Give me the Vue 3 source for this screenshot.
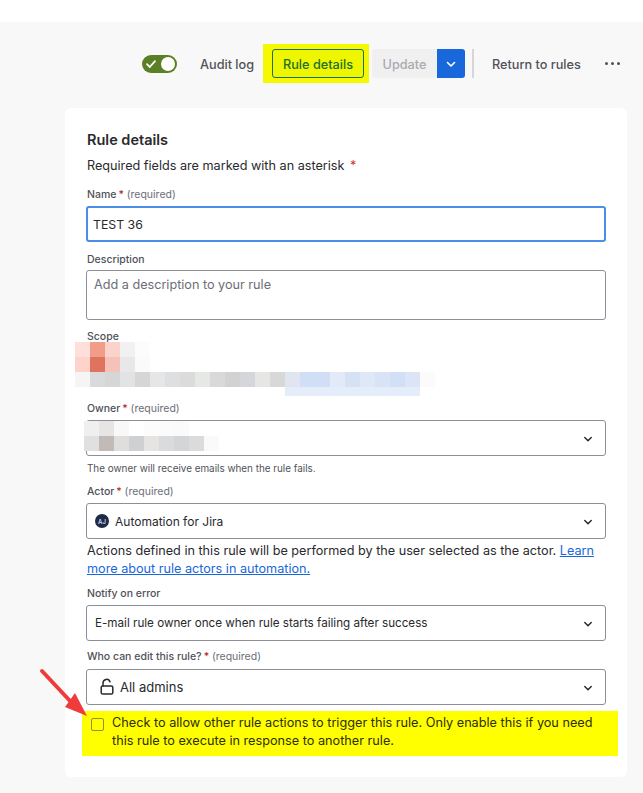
<script setup>
const scopeBlur = [
  ['#ffdfdb', '#f29c8a', '#fad3cb', '#f1f1f1', '#fcfcfc'],
  ['#fdd3cc', '#e0735d', '#f6c1b8', '#e8e8e8', '#fafafa'],
  ['#f5f5f3', '#d9dadc', '#d5d6d6', '#e2e3e5', '#d6d6d6', '#e6e6e6', '#dedfe1', '#dadbda', '#e6e8e6', '#d9d9d9', '#d2d2d2', '#d5d6db', '#e6e6e5', '#d9d8d8', '#e1e5ef', '#d0dff5', '#d0dff5', '#e2eafa', '#d5e2f4', '#dfe8f7', '#d8e4f6', '#d1e0f6', '#dbe5f6', '#fbfbfb'],
]
const ownerBlur = [
  ['#efefef', '#e6e5e4', '#f8f8f8', '#ffffff', '#fcfcfc', '#fbfbfb', '#fafafa'],
  ['#e0e0e0', '#c2bab6', '#e0dedc', '#cfd0d2', '#e6e4e2', '#dadbdd', '#d4d5d7', '#dbdbdb', '#fafafa'],
]
</script>

<template>
  <div class="page">
    <div class="top-strip" />
    <div class="content">
      <header class="toolbar">
        <span class="toggle">
          <svg width="12" height="12" viewBox="0 0 12 12" fill="none">
            <path d="M2 6.2 4.8 9 10 3.2" stroke="#fff" stroke-width="1.8" stroke-linecap="round" stroke-linejoin="round"/>
          </svg>
          <span class="knob" />
        </span>
        <span class="tool-link audit">Audit log</span>
        <span class="mark">
          <span class="details-btn">Rule details</span>
        </span>
        <span class="update-group">
          <span class="update">Update</span>
          <span class="update-more">
            <svg width="12" height="12" viewBox="0 0 12 12" fill="none">
              <path d="M2.5 4.5 6 8l3.5-3.5" stroke="#fff" stroke-width="1.6" stroke-linecap="round" stroke-linejoin="round"/>
            </svg>
          </span>
        </span>
        <span class="divider" />
        <span class="tool-link return">Return to rules</span>
        <span class="dots"><i /><i /><i /></span>
      </header>

      <main class="card">
        <h2 class="title">Rule details</h2>
        <p class="hint">Required fields are marked with an asterisk <b>*</b></p>

        <label class="label label--name">Name<b>*</b> <span>(required)</span></label>
        <div class="input input--focus">TEST 36</div>

        <label class="label label--desc">Description</label>
        <div class="input input--area">Add a description to your rule</div>

        <label class="label label--scope">Scope</label>
        <div class="scope-value">
          <div class="blur blur--scope">
            <div v-for="(row, r) in scopeBlur" :key="r" class="blur-row">
              <span v-for="(c, i) in row" :key="i" :style="{ background: c }" />
            </div>
            <div class="blur-tail" />
          </div>
        </div>

        <label class="label label--owner">Owner<b>*</b> <span>(required)</span></label>
        <div class="input input--select input--owner">
          <div class="blur blur--owner">
            <div v-for="(row, r) in ownerBlur" :key="r" class="blur-row">
              <span v-for="(c, i) in row" :key="i" :style="{ background: c }" />
            </div>
          </div>
          <svg class="chev" width="12" height="12" viewBox="0 0 12 12" fill="none">
            <path d="M2.8 4.5 6 7.7l3.2-3.2" stroke="#292a2e" stroke-width="1.5" stroke-linecap="round" stroke-linejoin="round"/>
          </svg>
        </div>
        <p class="help">The owner will receive emails when the rule fails.</p>

        <label class="label label--actor">Actor<b>*</b> <span>(required)</span></label>
        <div class="input input--select input--actor">
          <span class="avatar">AJ</span>
          <span>Automation for Jira</span>
          <svg class="chev" width="12" height="12" viewBox="0 0 12 12" fill="none">
            <path d="M2.8 4.5 6 7.7l3.2-3.2" stroke="#292a2e" stroke-width="1.5" stroke-linecap="round" stroke-linejoin="round"/>
          </svg>
        </div>
        <p class="actor-note">
          Actions defined in this rule will be performed by the user selected as the actor.
          <a>Learn more about rule actors in automation.</a>
        </p>

        <label class="label label--notify">Notify on error</label>
        <div class="input input--select input--notify">
          <span>E-mail rule owner once when rule starts failing after success</span>
          <svg class="chev" width="12" height="12" viewBox="0 0 12 12" fill="none">
            <path d="M2.8 4.5 6 7.7l3.2-3.2" stroke="#292a2e" stroke-width="1.5" stroke-linecap="round" stroke-linejoin="round"/>
          </svg>
        </div>

        <label class="label label--who">Who can edit this rule?<b>*</b> <span>(required)</span></label>
        <div class="input input--select input--who">
          <svg class="lock" width="16" height="18" viewBox="0 0 16 18" fill="none">
            <path d="M4 8V5a3.6 3.6 0 0 1 7-1.2" stroke="#292a2e" stroke-width="1.5" stroke-linecap="round"/>
            <rect x="2.2" y="8" width="11.6" height="8" rx="1.6" stroke="#292a2e" stroke-width="1.5"/>
          </svg>
          <span>All admins</span>
          <svg class="chev" width="12" height="12" viewBox="0 0 12 12" fill="none">
            <path d="M2.8 4.5 6 7.7l3.2-3.2" stroke="#292a2e" stroke-width="1.5" stroke-linecap="round" stroke-linejoin="round"/>
          </svg>
        </div>

        <div class="check-row">
          <span class="checkbox" />
          <p>Check to allow other rule actions to trigger this rule. Only enable this if you need this rule to execute in response to another rule.</p>
          <svg class="arrow" width="52" height="52" viewBox="0 0 52 52" fill="none">
            <path d="M3 3 32 34" stroke="#ef3b3b" stroke-width="4" stroke-linecap="round"/>
            <path d="M48 48 26 39 36 25Z" fill="#ef3b3b"/>
          </svg>
        </div>
      </main>
    </div>
  </div>
</template>

<style scoped>
.page {
  width: 643px;
  height: 793px;
  overflow: hidden;
  background: #fff;
  font-family: Inter, "Noto Sans", sans-serif;
  color: #292a2e;
}
.top-strip { height: 22px; }
.content {
  height: 771px;
  background: #f8f8f8;
  padding-left: 65px;
}

/* toolbar */
.toolbar {
  height: 83px;
  margin-bottom: 3px;
  display: flex;
  align-items: center;
  font-size: 12.7px;
  font-weight: 500;
  color: #505258;
}
.toggle {
  width: 35px;
  height: 18px;
  margin-left: 77px;
  border-radius: 9px;
  background: #5b7f24;
  display: flex;
  align-items: center;
  justify-content: space-between;
  padding: 0 2px 0 3px;
  box-sizing: border-box;
}
.knob { width: 14px; height: 14px; border-radius: 50%; background: #fff; }
.tool-link { padding-top: 2px; }
.audit { margin-left: 23px; width: 54px; white-space: nowrap; }
.mark {
  margin-left: 9px;
  background: #f5f900;
  padding: 0 5px 0 9px;
  height: 39px;
  box-sizing: border-box;
  display: flex;
  align-items: center;
}
.details-btn {
  width: 92px;
  height: 29px;
  box-sizing: border-box;
  padding-top: 1px;
  border: 1px solid #216e4e;
  border-radius: 3px;
  background: #eef700;
  color: #216e2e;
  display: flex;
  align-items: center;
  justify-content: center;
}
.update-group { display: flex; margin-left: 3px; height: 29px; }
.update {
  width: 65px;
  box-sizing: border-box;
  padding-top: 1px;
  background: #f0f0f0;
  color: #a9abaf;
  display: flex;
  align-items: center;
  justify-content: center;
  border-radius: 3px 0 0 3px;
}
.update-more {
  width: 28px;
  background: #1868db;
  border-radius: 0 3px 3px 0;
  display: flex;
  align-items: center;
  justify-content: center;
}
.divider { width: 2px; height: 29px; background: #d6d6d6; margin-left: 7px; }
.return { margin-left: 18px; width: 88px; white-space: nowrap; }
.dots { display: flex; gap: 3px; margin-left: 25px; }
.dots i { width: 3px; height: 3px; border-radius: 50%; background: #505258; }

/* card */
.card {
  width: 562px;
  height: 669px;
  box-sizing: border-box;
  background: #fff;
  border-radius: 6px;
  padding: 23px 21px 0;
}
.title { margin: 0 0 0 1px; font-size: 14.5px; line-height: 18px; font-weight: 600; color: #292a2e; }
.hint { margin: 8px 0 0 1px; font-size: 12.65px; line-height: 18px; color: #292a2e; }
.hint b { color: #c9372c; font-weight: 400; margin-left: 2px; }
.label {
  display: block;
  margin: 10px 0 0 1px;
  font-size: 10.5px;
  line-height: 14px;
  font-weight: 500;
  color: #505258;
}
.label b { color: #ae2e24; font-weight: 500; margin-left: 2px; }
.label span { font-weight: 400; color: #6b6e76; }
.label--name { margin-top: 13px; }
.label--desc { margin-top: 11px; }
.label--scope { margin-top: 10px; }
.label--owner { margin-top: 1px; }
.label--actor { margin-top: 10px; }
.label--notify { margin-top: 9px; }
.label--who { margin-top: 9px; }

.input {
  position: relative;
  box-sizing: border-box;
  width: 520px;
  min-height: 36px;
  margin-top: 4px;
  border: 1px solid #8c8f97;
  border-radius: 3px;
  padding: 0 7px;
  display: flex;
  align-items: center;
  font-size: 12px;
  color: #292a2e;
}
.input--focus { border: 2px solid #4c8ee6; padding: 0 5px; font-size: 12.3px; }
.input--area {
  height: 50px;
  margin-top: 3px;
  align-items: flex-start;
  padding-top: 6px;
  font-size: 12.65px;
  color: #6b6e76;
}
.input--select { justify-content: flex-start; gap: 6px; }
.input--actor { padding-left: 8px; gap: 6px; }
.input--notify { padding-left: 8px; font-size: 11.65px; }
.input--who { margin-top: 5px; padding-left: 12px; gap: 5px; font-size: 13px; }
.chev { position: absolute; right: 11px; top: 12px; }
.lock { flex: none; }
.avatar {
  width: 14px;
  height: 14px;
  border-radius: 50%;
  background: #1c2b4a;
  color: #cfd6e4;
  font-size: 6px;
  font-weight: 600;
  display: flex;
  align-items: center;
  justify-content: center;
}

/* pixelated redactions lie over the fields */
.scope-value { position: relative; height: 57px; }
.blur { position: absolute; }
.blur-row { display: flex; height: 15px; }
.blur-row span { width: 15px; flex: none; }
.blur--scope { left: -11px; top: -2px; }
.blur-tail {
  height: 9px;
  margin-left: 210px;
  width: 135px;
  background: #e6edfa;
}
.blur--owner { left: -3px; top: 0; }

.help { margin: 5px 0 0 1px; font-size: 9.9px; line-height: 14px; color: #505258; }
.actor-note { margin: 3px 0 0 1px; font-size: 12.65px; line-height: 18px; color: #292a2e; }
.actor-note a { color: #1868db; text-decoration: underline; }

.check-row {
  position: relative;
  width: 536px;
  height: 45px;
  margin: 6px 0 0 -4px;
  box-sizing: border-box;
  background: #ffff00;
  display: flex;
  padding: 3px 6px 0 9px;
}
.check-row p { margin: 0; font-size: 12.7px; line-height: 18px; color: #2e2e08; }
.checkbox {
  flex: none;
  width: 11px;
  height: 11px;
  margin: 4px 8px 0 0;
  border: 1px solid #8f8f3a;
  border-radius: 2px;
}
.arrow { position: absolute; left: -43px; top: -43px; }
</style>
